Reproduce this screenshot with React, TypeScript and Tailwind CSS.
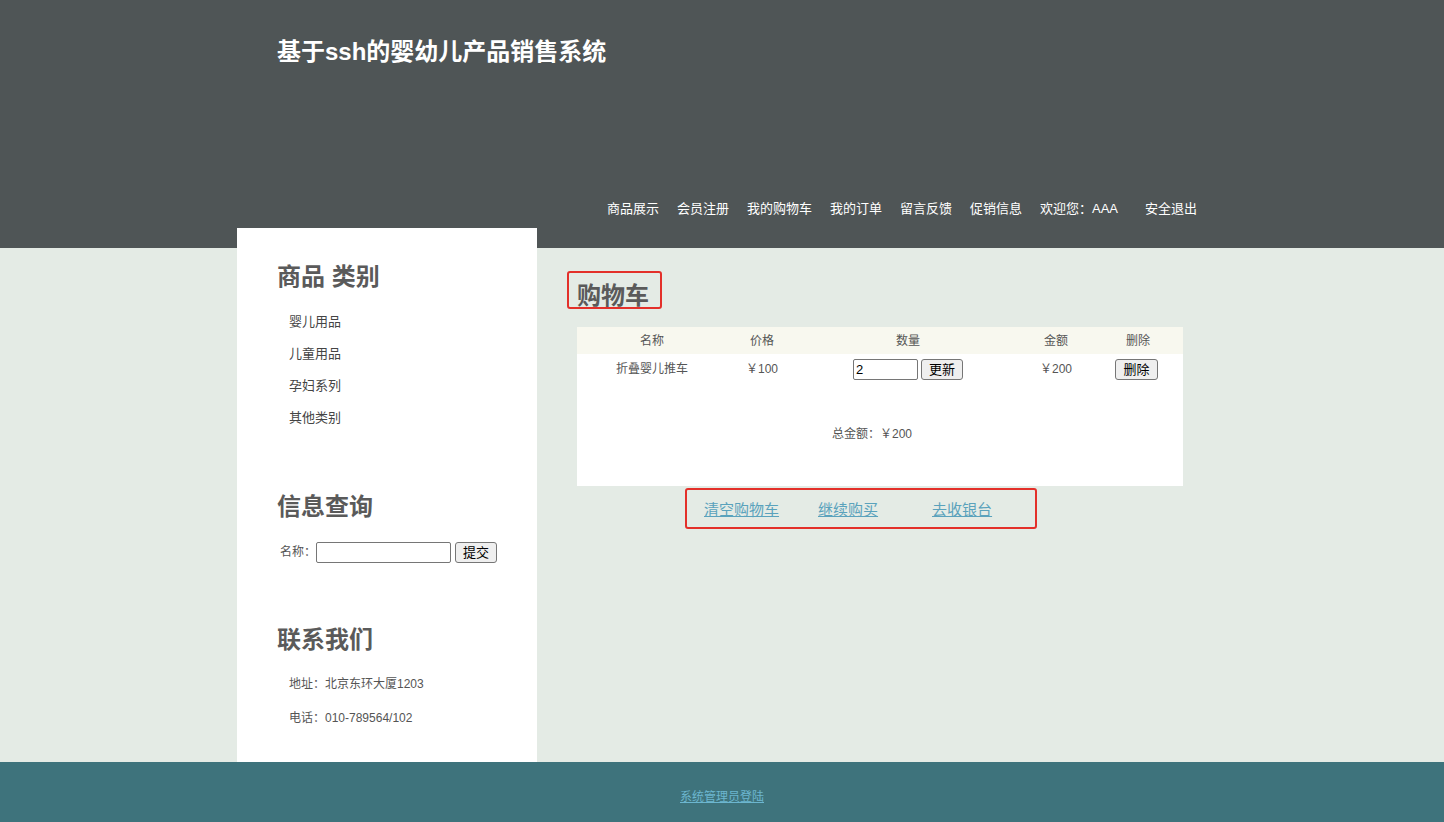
const FONT = '"Liberation Sans", "Noto Sans CJK SC", sans-serif';

const navItems = ['商品展示', '会员注册', '我的购物车', '我的订单', '留言反馈', '促销信息'];
const categories = ['婴儿用品', '儿童用品', '孕妇系列', '其他类别'];

function SideHeading({ children }: { children: React.ReactNode }) {
  return <h2 className="text-[24px] leading-[30px] font-bold text-[#5a5a5a]">{children}</h2>;
}

export default function App() {
  return (
    <div className="min-h-screen bg-[#e4ebe5]" style={{ fontFamily: FONT }}>
      {/* header */}
      <div className="h-[248px] bg-[#4f5556]">
        <div className="w-[970px] mx-auto h-full flex flex-col">
          <h1 className="pl-[40px] pt-[36px] text-[24px] leading-[32px] font-bold text-white">
            基于ssh的婴幼儿产品销售系统
          </h1>
          <div className="mt-auto mb-[30px] pr-[10px] flex justify-end items-center gap-[18px] text-[13px] leading-[18px] text-white">
            {navItems.map((n) => (
              <span key={n}>{n}</span>
            ))}
            <span>欢迎您：AAA</span>
            <span className="ml-[9px]">安全退出</span>
          </div>
        </div>
      </div>

      {/* body */}
      <div className="w-[970px] mx-auto flex -mt-[20px]">
        <aside className="w-[300px] h-[534px] bg-white px-[40px] pt-[34px]">
          <SideHeading>商品 类别</SideHeading>
          <ul className="mt-[14px] pl-[12px] text-[13px] leading-[32px] text-[#444]">
            {categories.map((c) => (
              <li key={c}>{c}</li>
            ))}
          </ul>

          <div className="mt-[58px]">
            <SideHeading>信息查询</SideHeading>
          </div>
          <div className="mt-[18px] flex items-center h-[24px] pl-[3px] text-[12px] text-[#555]">
            <span>名称：</span>
            <input className="w-[135px] h-[21px] border border-[#767676] rounded-[2px] bg-white" />
            <button className="ml-[4px] h-[21px] px-[7px] bg-[#efefef] border border-[#767676] rounded-[3px] text-[13px] text-black">
              提交
            </button>
          </div>

          <div className="mt-[61px]">
            <SideHeading>联系我们</SideHeading>
          </div>
          <div className="mt-[12px] pl-[12px] text-[12px] leading-[34px] text-[#555]">
            <p>地址：北京东环大厦1203</p>
            <p>电话：010-789564/102</p>
          </div>
        </aside>

        <main className="flex-1 pl-[40px] pt-[43px]">
          <div className="-ml-[10px] w-[95px] h-[38px] border-2 border-[#e3302a] rounded-[3px] pl-[8px] pt-[10px]">
            <h2 className="text-[24px] leading-[26px] font-bold text-[#5a5a5a]">购物车</h2>
          </div>

          <div className="mt-[18px] w-[606px] h-[159px] bg-white text-[12px] text-[#555]">
            <div className="h-[27px] bg-[#f8f8ef] grid grid-cols-[150px_70px_222px_74px_90px] items-center text-center">
              <span>名称</span>
              <span>价格</span>
              <span>数量</span>
              <span>金额</span>
              <span>删除</span>
            </div>
            <div className="h-[28px] grid grid-cols-[150px_70px_222px_74px_90px] text-center">
              <span className="pt-[6px]">折叠婴儿推车</span>
              <span className="pt-[6px]">￥100</span>
              <div className="flex items-center justify-center pt-[2px]">
                <input
                  defaultValue="2"
                  className="w-[65px] h-[21px] border border-[#767676] rounded-[2px] px-[2px] text-[13px] text-black bg-white"
                />
                <button className="ml-[3px] h-[21px] px-[7px] bg-[#efefef] border border-[#767676] rounded-[3px] text-[13px] text-black">
                  更新
                </button>
              </div>
              <span className="pt-[6px]">￥200</span>
              <div className="flex justify-center pt-[5px] pr-[3px]">
                <button className="h-[21px] px-[7px] bg-[#efefef] border border-[#767676] rounded-[3px] text-[13px] text-black">
                  删除
                </button>
              </div>
            </div>
            <p className="mt-[42px] leading-[20px] text-center pr-[16px]">总金额：￥200</p>
          </div>

          <div className="mt-[2px] ml-[108px] w-[352px] h-[41px] border-2 border-[#e3302a] rounded-[3px] flex items-center pl-[17px] pt-[3px] text-[15px] text-[#5aa2bc] underline">
            <a href="#">清空购物车</a>
            <a href="#" className="ml-[39px]">继续购买</a>
            <a href="#" className="ml-[54px]">去收银台</a>
          </div>
        </main>
      </div>

      {/* footer */}
      <div className="h-[60px] bg-[#3e737c] flex items-center justify-center pt-[10px]">
        <a href="#" className="text-[12px] text-[#6cb6cf] underline">
          系统管理员登陆
        </a>
      </div>
    </div>
  );
}
